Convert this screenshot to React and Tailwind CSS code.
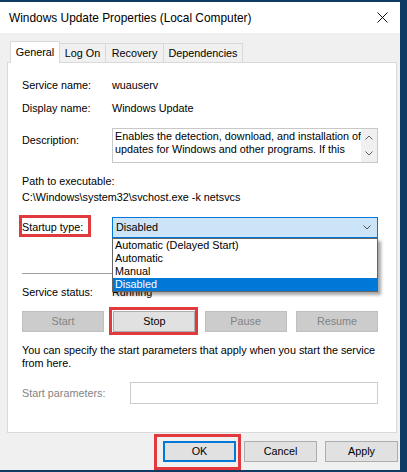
export default function App() {
  const btn = "h-[21px] flex items-center justify-center border";
  const dis = "bg-[#cccccc] border-[#bfbfbf] text-[#838383]";
  const norm = "bg-[#e1e1e1] border-[#adadad] text-black";
  return (
    <div className="w-[407px] h-[472px] bg-[#0e3a63] pt-[2px] pr-[7px] overflow-hidden font-['Liberation_Sans',Arial,sans-serif] text-[10.8px] leading-[13px] text-black">
      <div className="relative w-[400px] h-[468px] bg-[#f0f0f0] flex flex-col">
        {/* title bar */}
        <div className="h-[31px] bg-white flex items-center justify-between pl-[9px] pr-[12px] shrink-0">
          <span className="text-[11.9px] leading-[16px]">Windows Update Properties (Local Computer)</span>
          <svg width="11" height="11" viewBox="0 0 11 11">
            <path d="M0.5 0.5L10.5 10.5M10.5 0.5L0.5 10.5" stroke="#111" strokeWidth="1" />
          </svg>
        </div>

        {/* tabs */}
        <div className="flex items-end h-[29px] pl-[10px] shrink-0">
          <div className="relative z-10 -mb-px w-[50px] h-[22px] bg-white border border-b-0 border-[#d9d9d9] flex justify-center pt-[4px]">
            General
          </div>
          <div className="w-[46px] h-[19px] border-t border-r border-[#d9d9d9] flex items-center justify-center">Log On</div>
          <div className="w-[58px] h-[19px] border-t border-r border-[#d9d9d9] flex items-center justify-center">Recovery</div>
          <div className="w-[79px] h-[19px] border-t border-r border-[#d9d9d9] flex items-center justify-center">Dependencies</div>
        </div>

        {/* panel */}
        <div className="ml-[7px] w-[390px] h-[371px] shrink-0 border border-[#d9d9d9] bg-white pl-[14px] pr-[18px] pt-[16px] flex flex-col">
          <div className="flex">
            <div className="w-[90px]">Service name:</div>
            <div>wuauserv</div>
          </div>
          <div className="flex mt-[10px]">
            <div className="w-[90px]">Display name:</div>
            <div>Windows Update</div>
          </div>
          <div className="flex mt-[13px]">
            <div className="w-[90px] pt-[6px]">Description:</div>
            <div className="w-[266px] h-[35px] border border-[#c8c8c8] flex">
              <div className="flex-1 pl-[2px] pt-[1px] overflow-hidden whitespace-nowrap">
                <div>Enables the detection, download, and installation of</div>
                <div>updates for Windows and other programs. If this</div>
              </div>
              <div className="w-[16px] bg-[#f0f0f0] flex flex-col items-center justify-between py-[6px]">
                <svg width="8" height="5" viewBox="0 0 8 5"><path d="M0.5 4.5L4 1L7.5 4.5" fill="none" stroke="#606060" strokeWidth="1" /></svg>
                <svg width="8" height="5" viewBox="0 0 8 5"><path d="M0.5 0.5L4 4L7.5 0.5" fill="none" stroke="#606060" strokeWidth="1" /></svg>
              </div>
            </div>
          </div>
          <div className="mt-[12px]">Path to executable:</div>
          <div className="mt-[3px]">C:\Windows\system32\svchost.exe -k netsvcs</div>

          <div className="flex items-center mt-[13px]">
            <div className="w-[90px]">Startup type:</div>
            <div className="relative w-[266px] h-[21px] border border-[#0078d7] bg-[#cce4f7] flex items-center justify-between pl-[3px] pr-[6px]">
              <span>Disabled</span>
              <svg width="8" height="5" viewBox="0 0 8 5"><path d="M0.5 0.5L4 4L7.5 0.5" fill="none" stroke="#505050" strokeWidth="1" /></svg>
              <div className="absolute left-[-1px] top-[20px] w-[266px] z-20 bg-white border border-[#646464] shadow-[3px_3px_3px_rgba(0,0,0,0.35)] flex flex-col">
                <div className="h-[13px] pl-[2px]">Automatic (Delayed Start)</div>
                <div className="h-[13px] pl-[2px]">Automatic</div>
                <div className="h-[13px] pl-[2px]">Manual</div>
                <div className="h-[13px] pl-[2px] bg-[#0078d7] text-white">Disabled</div>
              </div>
            </div>
          </div>

          <div className="mt-[35px] h-px bg-[#a0a0a0]" />

          <div className="flex mt-[12px]">
            <div className="w-[90px]">Service status:</div>
            <div>Running</div>
          </div>

          <div className="flex justify-between mt-[12px]">
            <div className={`w-[82px] ${btn} ${dis}`}>Start</div>
            <div className={`w-[82px] ${btn} ${norm}`}>Stop</div>
            <div className={`w-[82px] ${btn} ${dis}`}>Pause</div>
            <div className={`w-[82px] ${btn} ${dis}`}>Resume</div>
          </div>

          <div className="mt-[12px] whitespace-nowrap">
            You can specify the start parameters that apply when you start the service
            <br />
            from here.
          </div>

          <div className="flex items-center mt-[12px]">
            <div className="w-[108px] text-[#838383]">Start parameters:</div>
            <div className="w-[248px] h-[22px] border border-[#cccccc] bg-white" />
          </div>
        </div>

        {/* bottom buttons */}
        <div className="flex gap-[8px] ml-[163px] mt-[8px]">
          <div className="w-[73px] h-[21px] flex items-center justify-center bg-[#e1e1e1] border-2 border-[#0078d7]">OK</div>
          <div className={`w-[73px] ${btn} ${norm}`}>Cancel</div>
          <div className={`w-[73px] ${btn} ${norm}`}>Apply</div>
        </div>

        {/* annotation boxes */}
        <div className="absolute left-[19px] top-[213px] w-[72px] h-[22px] border-[3px] border-[#e0393e] pointer-events-none" />
        <div className="absolute left-[109px] top-[305px] w-[89px] h-[28px] border-[3px] border-[#e0393e] pointer-events-none" />
        <div className="absolute left-[154px] top-[432px] w-[87px] h-[36px] border-[3px] border-[#e0393e] pointer-events-none" />
      </div>
    </div>
  );
}
